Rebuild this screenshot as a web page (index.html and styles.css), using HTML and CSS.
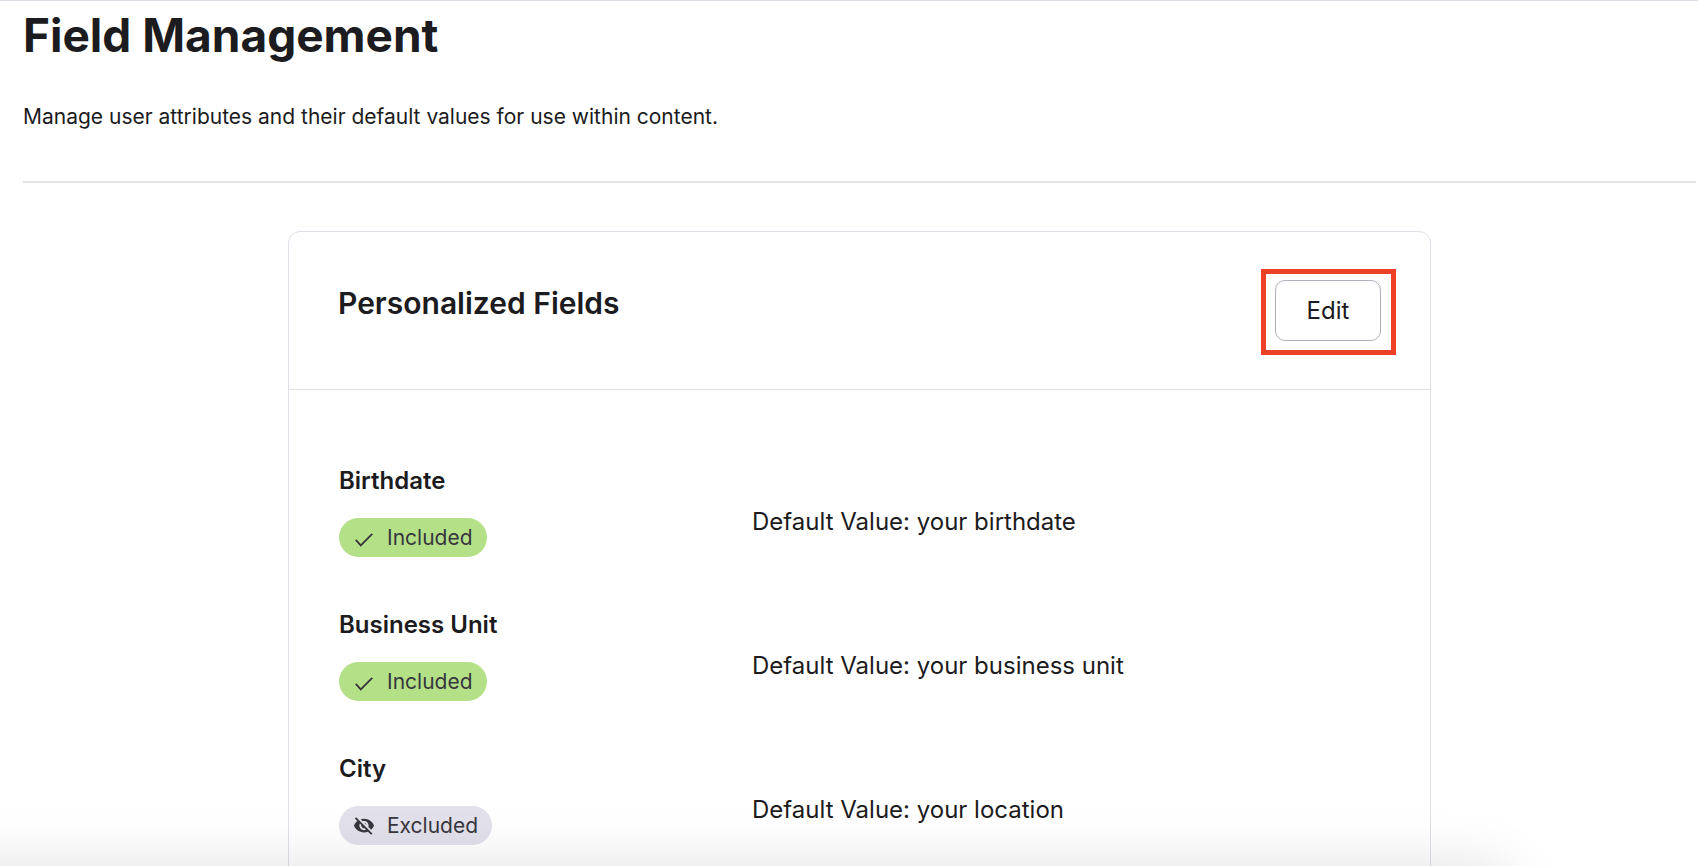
FILE: index.html
```html
<!DOCTYPE html>
<html lang="en">
	<head>
		<meta charset="utf-8">
		<title>Field Management</title>
		<link rel="stylesheet" href="styles.css">
	</head>
	<body>
		<!-- shared icons -->
		<svg class="sprite" aria-hidden="true">
			<symbol id="icon-check" viewBox="0 0 24 24">
				<path d="M3 14l5.500 6L21 7.500" fill="none" stroke="currentColor" stroke-width="2"/>
			</symbol>
			<symbol id="icon-hidden" viewBox="0 0 24 24">
				<path fill="currentColor" d="M12 6.500c2.760 0 5 2.240 5 5 0 .510-.100 1-.240 1.460l3.060 3.060c1.390-1.230 2.490-2.770 3.180-4.530C21.270 7.110 17 4 12 4c-1.270 0-2.490.200-3.640.570l2.170 2.170c.470-.140.960-.240 1.470-.240zM3.420 2.450L2 3.870l2.680 2.670A11.892 11.892 0 0 0 1 11.500C2.730 15.890 7 19 12 19c1.520 0 2.970-.300 4.310-.820l3.430 3.430 1.420-1.410zM12 16.500c-2.760 0-5-2.240-5-5 0-.770.180-1.500.490-2.140l1.570 1.570c-.030.180-.060.370-.060.570 0 1.660 1.340 3 3 3 .200 0 .380-.030.570-.070L14.140 16c-.650.320-1.370.500-2.140.500zm2.970-5.330a2.970 2.970 0 0 0-2.640-2.640z"/>
			</symbol>
		</svg>

		<header class="page-header">
			<h1>Field Management</h1>
			<p>Manage user attributes and their default values for use within content.</p>
		</header>

		<main class="card">
			<div class="card-header">
				<h2>Personalized Fields</h2>
				<div class="highlight">
					<button type="button" class="edit">Edit</button>
				</div>
			</div>

			<div class="fields">
				<div class="field">
					<div class="field-info">
						<h3>Birthdate</h3>
						<span class="badge included"><svg><use href="#icon-check"/></svg>Included</span>
					</div>
					<p>Default Value: your birthdate</p>
				</div>

				<div class="field">
					<div class="field-info">
						<h3>Business Unit</h3>
						<span class="badge included"><svg><use href="#icon-check"/></svg>Included</span>
					</div>
					<p>Default Value: your business unit</p>
				</div>

				<div class="field">
					<div class="field-info">
						<h3>City</h3>
						<span class="badge excluded"><svg><use href="#icon-hidden"/></svg>Excluded</span>
					</div>
					<p>Default Value: your location</p>
				</div>
			</div>
		</main>

		<!-- soft shadow along the bottom of the window -->
		<div class="bottom-shadow"></div>
	</body>
</html>
```

FILE: styles.css
```css
* {
	box-sizing: border-box;
}

body {
	margin: 0;
	height: 100vh;
	overflow: hidden;
	padding: 0 2px 0 23px;
	border-top: 1px solid #dddce4;
	background-color: #fff;
	color: #1c1b20;
	font-family: Inter, "Liberation Sans", sans-serif;
	font-size: 24px;
	line-height: 32px;
}

h1, h2, h3, p {
	margin: 0;
}

.sprite {
	display: none;
}

.page-header {
	border-bottom: 2px solid #e4e3eb;
	padding-bottom: 48px;
}

h1 {
	font-size: 46px;
	line-height: 68px;
	font-weight: 700;
}

.page-header p {
	margin-top: 32px;
	font-size: 21px;
}

.card {
	max-width: 1143px;
	margin: 48px auto 0;
	border: 1px solid #e1e0e9;
	border-radius: 12px;
}

.card-header {
	display: flex;
	justify-content: space-between;
	align-items: flex-start;
	padding: 37px 34px 34px 49px;
	border-bottom: 1px solid #e1e0e9;
}

h2 {
	margin-top: 14px;
	font-size: 30px;
	line-height: 40px;
	font-weight: 600;
}

/* red frame round the button */
.highlight {
	border: 5px solid #ed4026;
	padding: 6px 10px 9px 9px;
}

.edit {
	display: block;
	width: 106px;
	height: 61px;
	border: 1px solid #b1afb9;
	border-radius: 10px;
	background-color: #fff;
	color: inherit;
	font: inherit;
}

.fields {
	padding: 75px 50px;
}

.field {
	display: grid;
	grid-template-columns: 413px 1fr;
	align-items: center;
	margin-bottom: 52px;
}

.field p {
	padding-top: 22px;
}

h3 {
	margin-bottom: 21px;
	font-size: 24px;
	font-weight: 600;
}

.badge {
	display: flex;
	align-items: center;
	gap: 12px;
	width: fit-content;
	height: 39px;
	padding: 0 14px;
	border-radius: 20px;
	color: #38363d;
	font-size: 21px;
}

.badge svg {
	width: 22px;
	height: 22px;
}

.included {
	background-color: #b4e188;
}

.excluded {
	background-color: #e2e0ea;
}

.bottom-shadow {
	position: fixed;
	top: 100%;
	left: -80px;
	right: 190px;
	height: 100px;
	border-radius: 20px;
	box-shadow: 0 0 60px rgba(0, 0, 0, 0.12);
}
```
